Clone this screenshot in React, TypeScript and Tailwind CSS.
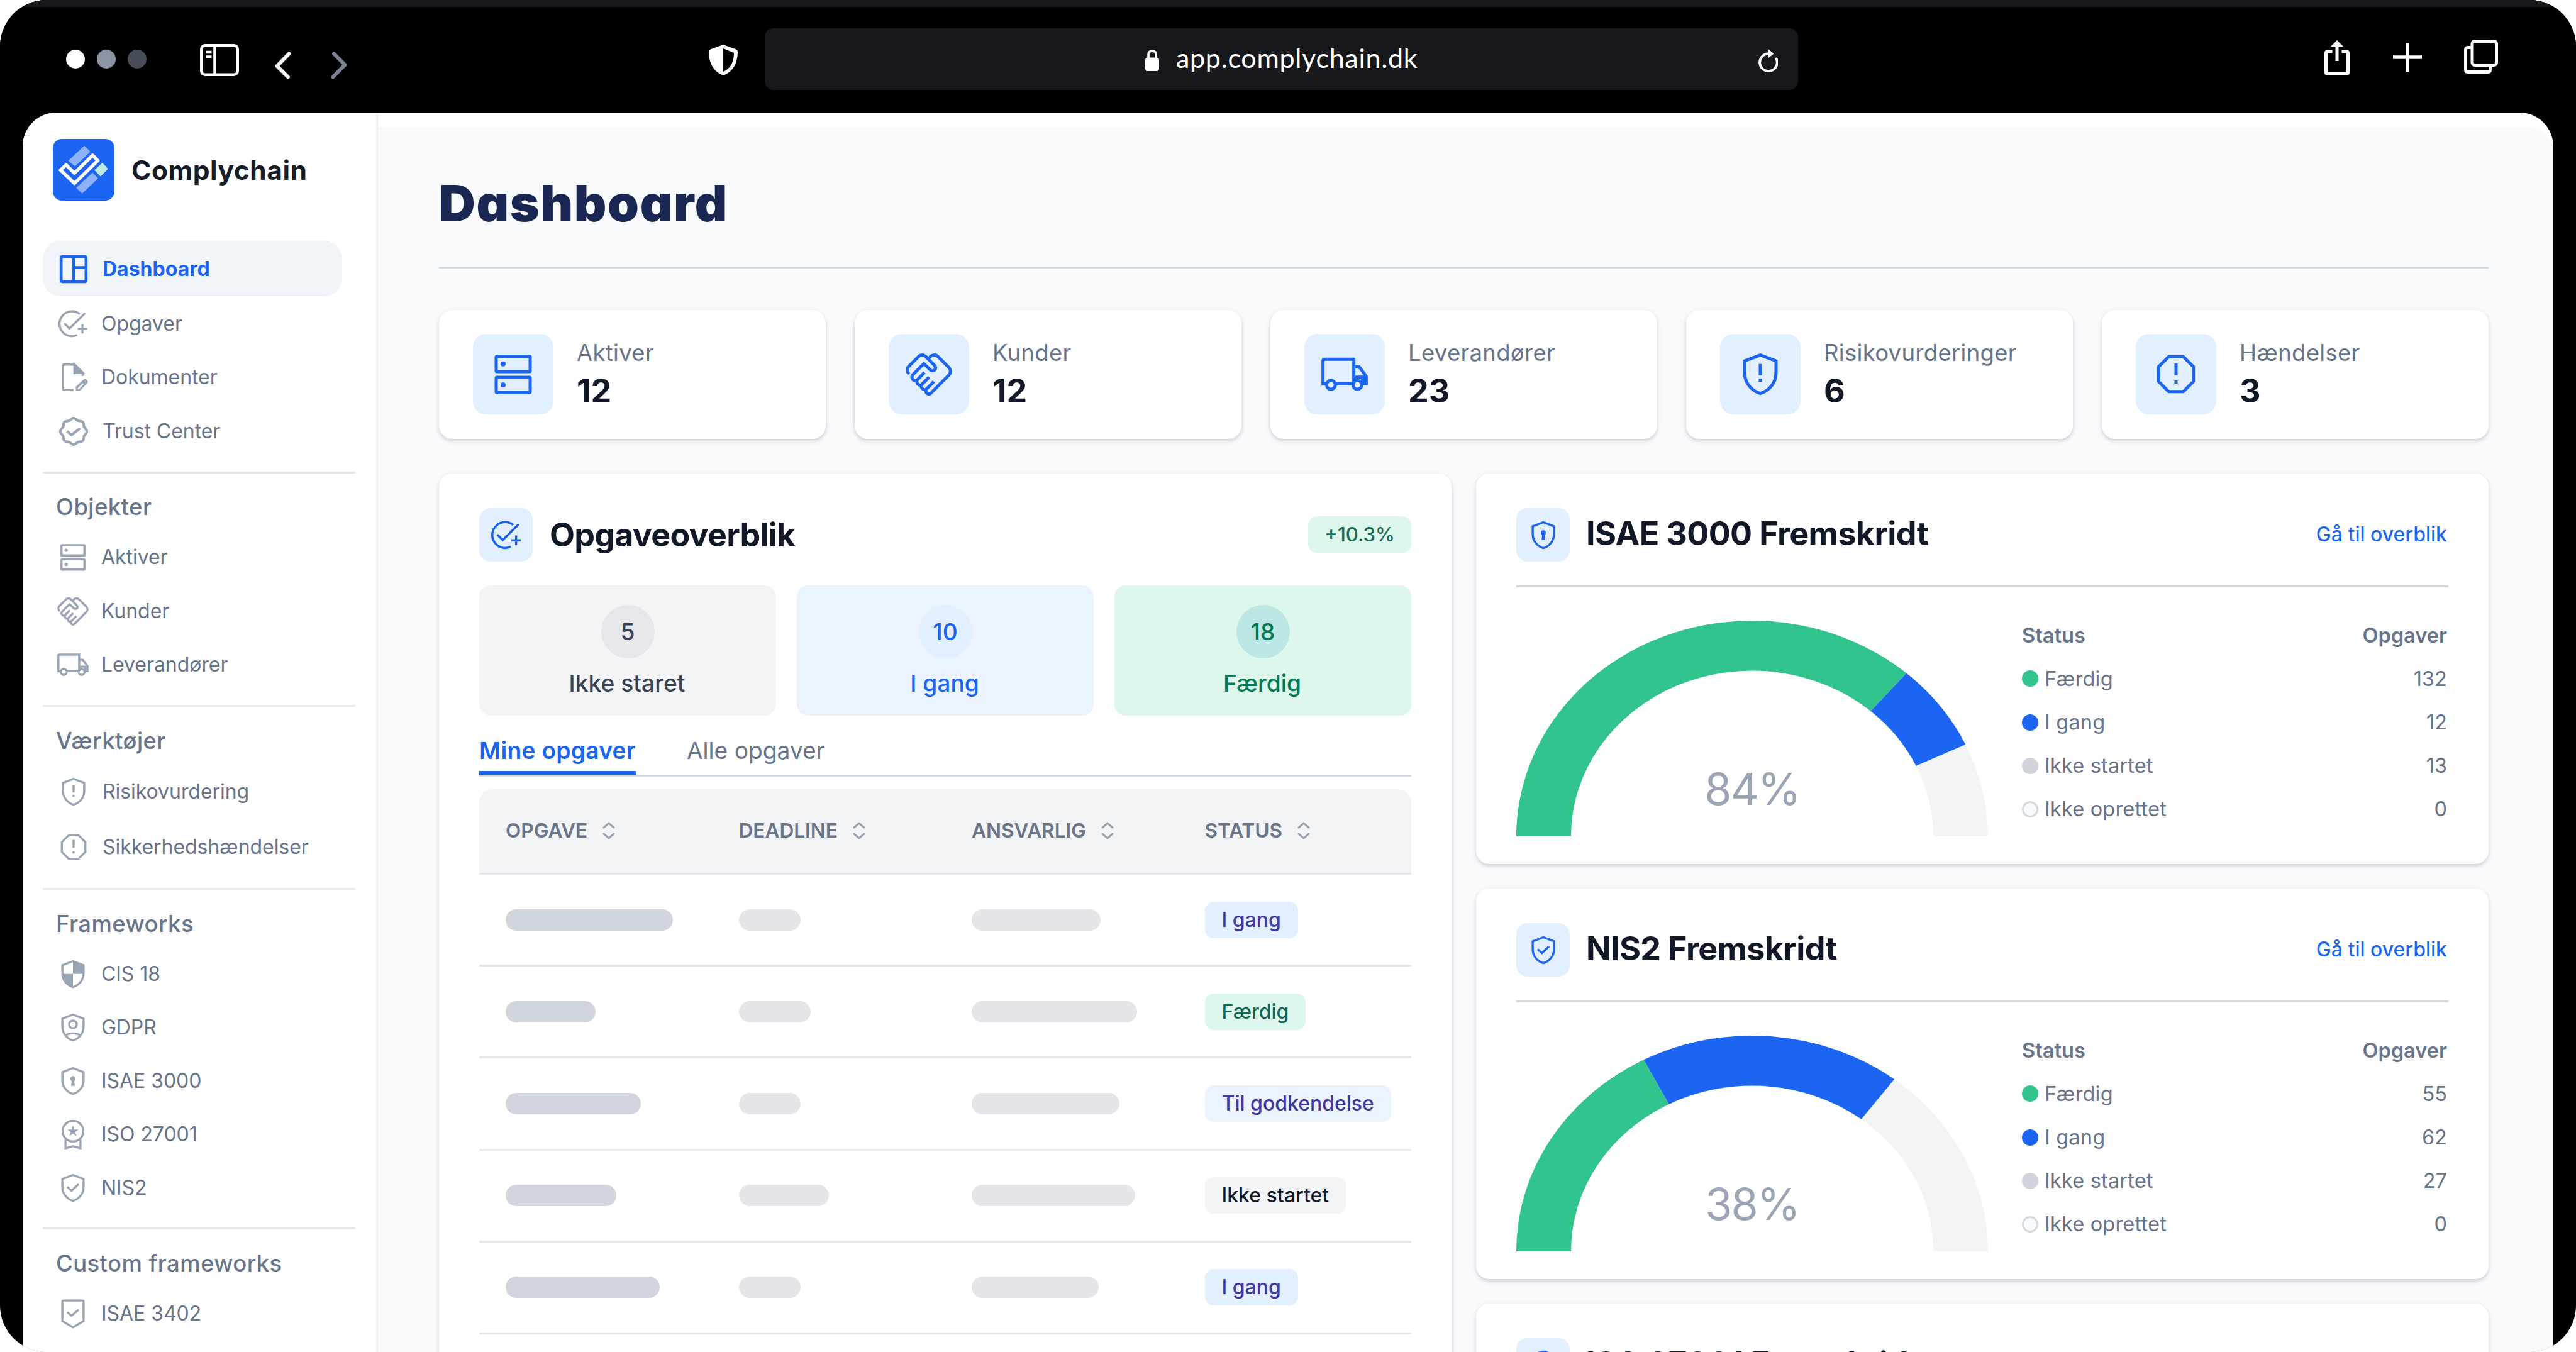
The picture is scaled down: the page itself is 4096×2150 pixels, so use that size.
import type { ReactNode } from 'react';
import clsx from 'clsx';

/* ---------- Icons ---------- */

const SHIELD = 'M12 2.9 19.5 5.7V11.4C19.5 16 16.3 19.9 12 21.2 7.7 19.9 4.5 16 4.5 11.4V5.7Z';

type IconProps = { className?: string; stroke?: number };

function Svg({ className, stroke = 1.5, children }: IconProps & { children: ReactNode }) {
  return (
    <svg
      viewBox="0 0 24 24"
      fill="none"
      stroke="currentColor"
      strokeWidth={stroke}
      className={clsx('shrink-0', className)}
    >
      {children}
    </svg>
  );
}

function GridIcon(props: IconProps) {
  return (
    <Svg {...props} stroke={2}>
      <rect x="3.5" y="3.5" width="17" height="17" rx="0.8" />
      <path d="M12 3.5V20.5M12 11H20.5" />
    </Svg>
  );
}

function TaskIcon(props: IconProps) {
  return (
    <Svg {...props}>
      <path d="M16.8 5.1A8.8 8.8 0 1 0 15 19.9" />
      <path d="M5.9 11.7 9.6 15.3 20.5 4.5M18.7 12.2V18.8M15.4 15.5H22" />
    </Svg>
  );
}

function DocumentIcon(props: IconProps) {
  return (
    <Svg {...props}>
      <path d="M12.4 21H5.6A.6.6 0 0 1 5 20.4V3.6A.6.6 0 0 1 5.6 3H13.2L19 8.8V11" />
      <path d="M13 3V9H19Z" fill="currentColor" />
      <path
        d="M14 21.7V18.7L19.6 13.4Q20.5 12.7 21.4 13.5L22.1 14.2Q23 15.2 22.1 16.1L16.8 21.7ZM15.5 20.3H16.2L19.6 16.9 18.9 16.2 15.5 19.5Z"
        fill="currentColor"
        fillRule="evenodd"
        stroke="none"
      />
    </Svg>
  );
}

function SealIcon(props: IconProps) {
  return (
    <Svg {...props} stroke={1.8}>
      <path
        strokeLinejoin="round"
        d="M21.4 12c0 1.3-1.5 2.3-2 3.2-.4 1 0 2.7-.9 3.5s-2.5.5-3.5.9c-.9.4-1.7 1.8-3 1.8s-2.1-1.4-3-1.8c-1-.4-2.6 0-3.5-.9s-.5-2.5-.9-3.5c-.5-.9-2-1.9-2-3.2s1.5-2.3 2-3.2c.4-1 0-2.7.9-3.5s2.5-.5 3.5-.9c.9-.4 1.7-1.8 3-1.8s2.1 1.4 3 1.8c1 .4 2.6 0 3.5.9s.5 2.5.9 3.5c.5.9 2 1.9 2 3.2Z"
      />
      <path d="M7.4 11.9 10.5 14.5 16.6 9.8" />
    </Svg>
  );
}

function ServerIcon(props: IconProps) {
  return (
    <Svg {...props}>
      <rect x="3.9" y="3.5" width="16.2" height="7.3" rx="0.4" />
      <rect x="3.9" y="13.5" width="16.2" height="7.3" rx="0.4" />
      <circle cx="7.2" cy="7.15" r="1.2" fill="currentColor" stroke="none" />
      <circle cx="7.2" cy="17.15" r="1.2" fill="currentColor" stroke="none" />
    </Svg>
  );
}

function HandshakeIcon(props: IconProps) {
  return (
    <Svg {...props}>
      <path
        strokeLinejoin="round"
        d="M2.5 12C1.5 10.8 1.5 9.2 2.5 8.2L7 3.7C8 2.6 9.5 2.6 10.5 3.6L14.7 7.9C15.3 8.6 15.3 9.4 14.7 10 14.1 10.6 13.2 10.5 12.6 9.9L9.6 7 4.4 12.2C3.7 12.9 3.7 13.9 4.4 14.6 4.9 15.1 5.6 15.3 6.2 15 6.1 16.6 7 17.4 8.4 17.2 8.2 18.7 9.1 19.5 10.5 19.4 10.4 21.3 12 22 13 21L21.6 12.4C22.5 11.4 22.5 9.9 21.6 8.9L16.4 3.7C15.2 2.5 13.4 2.6 12.1 4.2"
      />
      <path d="M6.2 15 9.9 11.2M8.4 17.2 12.1 13.4M10.5 19.4 14.4 15.5" />
    </Svg>
  );
}

function TruckIcon(props: IconProps) {
  return (
    <Svg {...props}>
      <path d="M3.3 16.6H1.7V5.5A.6.6 0 0 1 2.3 4.9H16.4V16.6M7.6 16.6H15.9M16.4 8.5H18.9L22.3 13V16.6H20.3M16.4 13.4H22.3" />
      <path d="M19.5 13.4H22.3V16.6H20.3Z" fill="currentColor" stroke="none" />
      <circle cx="5.5" cy="17.1" r="2.1" />
      <circle cx="18.1" cy="17.1" r="2.1" />
    </Svg>
  );
}

function ShieldAlertIcon(props: IconProps) {
  return (
    <Svg {...props}>
      <path d={SHIELD} />
      <path d="M12 7.1V12.5M12 14.1V15.7" />
    </Svg>
  );
}

function OctagonAlertIcon(props: IconProps) {
  return (
    <Svg {...props}>
      <path d="M8.5 3.7H15.5L20.3 8.5V15.5L15.5 20.3H8.5L3.7 15.5V8.5Z" />
      <path d="M12 6.9V12.6M12 15V16.5" />
    </Svg>
  );
}

function ShieldQuarterIcon(props: IconProps) {
  return (
    <Svg {...props}>
      <path d={SHIELD} />
      <path d="M12 2.9 19.5 5.7V11.9H12ZM12 11.9V21.2C8 19.9 4.9 16.4 4.5 11.9Z" fill="currentColor" stroke="none" />
    </Svg>
  );
}

function ShieldUserIcon(props: IconProps) {
  return (
    <Svg {...props}>
      <path d={SHIELD} />
      <circle cx="12" cy="9.8" r="2.7" />
      <path d="M6.5 17.6C9.5 15.7 14.5 15.7 17.5 17.6" />
    </Svg>
  );
}

function ShieldLockIcon(props: IconProps) {
  return (
    <Svg {...props}>
      <path d={SHIELD} />
      <circle cx="12" cy="10.4" r="1.8" fill="currentColor" stroke="none" />
      <path d="M11.3 11H12.7L13.3 15.3H10.7Z" fill="currentColor" stroke="none" />
    </Svg>
  );
}

function RibbonIcon(props: IconProps) {
  return (
    <Svg {...props}>
      <circle cx="12" cy="9.7" r="7.3" />
      <path d="M6.7 15.5V21.8L12 20.3 17.3 21.8V15.5" />
      <path
        d="M12 5.6 12.95 8.5H16L13.55 10.3 14.5 13.2 12 11.4 9.5 13.2 10.45 10.3 8 8.5H11.05Z"
        fill="currentColor"
        stroke="none"
      />
    </Svg>
  );
}

function ShieldCheckIcon(props: IconProps) {
  return (
    <Svg {...props}>
      <path d={SHIELD} />
      <path d="M8 11.3 11 14 16 9.3" />
    </Svg>
  );
}

function BookmarkCheckIcon(props: IconProps) {
  return (
    <Svg {...props}>
      <path d="M4.5 3.4A.8.8 0 0 1 5.3 2.7H18.7A.8.8 0 0 1 19.5 3.4V17.2L12 21.7 4.5 17.2Z" />
      <path d="M8 11 11 13.5 16 9.2" />
    </Svg>
  );
}

function SortIcon() {
  return (
    <svg viewBox="0 0 20 28" fill="none" stroke="#9ca5b4" strokeWidth="3" strokeLinecap="round" className="h-[28px] w-[20px]">
      <path d="M2 9 10 2 18 9M2 19 10 26 18 19" />
    </svg>
  );
}

function Logo() {
  return (
    <svg viewBox="0 0 100 100" className="size-[98px] shrink-0">
      <rect width="100" height="100" rx="15" fill="#1c64f2" />
      <path d="M51 11 61 20.5 36 44.5 25 35.5ZM64.5 54.5 73.5 64 47.5 88.5 38 79Z" fill="#fff" fillOpacity="0.5" />
      <path d="M80.5 38.5 89.5 48.5 77.5 61 67.5 50.5Z" fill="#bcebe8" />
      <path
        d="M21.5 42 12.5 50.5 35 72 73 35 64.5 26.5 35 55.5Z"
        fill="none"
        stroke="#fff"
        strokeWidth="5.5"
        strokeLinejoin="round"
      />
    </svg>
  );
}

/* ---------- Browser chrome ---------- */

function BrowserBar() {
  return (
    <header className="flex h-[179px] shrink-0 items-center border-t-[11px] border-[#17181c] bg-black pb-[2px] pl-[105px] text-white">
      <div className="flex gap-[19px]">
        <span className="size-[30px] rounded-full bg-white" />
        <span className="size-[30px] rounded-full bg-[#8b95a4]" />
        <span className="size-[30px] rounded-full bg-[#464d59]" />
      </div>

      <svg viewBox="0 0 62 51" fill="none" stroke="currentColor" strokeWidth="4.5" className="mt-[2px] ml-[85px] h-[51px] w-[62px]">
        <rect x="2.25" y="2.25" width="57.5" height="46.5" rx="6" />
        <path d="M23.5 2V49M10 13H18.5M10 20.5H18.5" />
      </svg>
      <svg viewBox="0 0 26 44" fill="none" stroke="currentColor" strokeWidth="6" strokeLinecap="round" strokeLinejoin="round" className="mt-[19px] ml-[57px] h-[44px] w-[26px]">
        <path d="M22.5 3.5 3.5 23 21 40.5" />
      </svg>
      <svg viewBox="0 0 26 44" fill="none" stroke="#788292" strokeWidth="6" strokeLinecap="round" strokeLinejoin="round" className="mt-[19px] ml-[63px] h-[44px] w-[26px]">
        <path d="M5 3.5 22.5 21 3.5 40.5" />
      </svg>

      <svg viewBox="0 0 46 49" className="mt-[2px] ml-[575px] h-[49px] w-[46px]">
        <path d="M23 0 43.5 7.5Q46 8.5 46 11.5C46 30 38 43 23 49 8 43 0 30 0 11.5Q0 8.5 2.5 7.5Z" fill="#fff" />
        <path d="M23 6 40 13C40 29 34 38 23 43Z" fill="#000" />
      </svg>

      <div className="ml-[43px] flex h-[98px] w-[1643px] items-center rounded-[14px] bg-[#17181c] pr-[32px] pl-[605px]">
        <svg viewBox="0 0 22 34" className="mt-[4px] h-[34px] w-[22px]">
          <path d="M5 14V8Q5 2 11 2T17 8V14" fill="none" stroke="#fff" strokeWidth="3.5" />
          <rect y="12.5" width="22" height="21.5" rx="4" fill="#fff" />
        </svg>
        <span className="mb-[5px] ml-[27px] font-['Lato','Open_Sans',sans-serif] text-[43px] leading-none tracking-[0.7px]">
          app.complychain.dk
        </span>
        <svg viewBox="0 0 32 37" fill="none" stroke="currentColor" strokeWidth="4" className="mt-[5px] ml-auto h-[37px] w-[32px]">
          <path d="M17 7.5A13.8 13.8 0 1 0 29.5 15.5" strokeLinecap="round" />
          <path d="M16.5 0 25.5 7.5 16.5 14.5Z" fill="currentColor" stroke="none" />
        </svg>
      </div>

      <svg viewBox="0 0 40 56" fill="none" stroke="currentColor" strokeWidth="5" className="mb-[5px] ml-[837px] h-[56px] w-[40px]">
        <path d="M12.5 18H5Q2.5 18 2.5 20.5V51Q2.5 53.5 5 53.5H35Q37.5 53.5 37.5 51V20.5Q37.5 18 35 18H27.5M20 8V33" />
        <path d="M20 0 30 10H10Z" fill="currentColor" stroke="none" />
      </svg>
      <svg viewBox="0 0 46 46" stroke="currentColor" strokeWidth="5.5" className="mb-[7px] ml-[69px] size-[46px]">
        <path d="M23 0V46M0 23H46" />
      </svg>
      <svg viewBox="0 0 54 54" fill="none" stroke="currentColor" strokeWidth="5" className="mb-[8px] ml-[67px] size-[54px]">
        <rect x="13" y="2.5" width="38.5" height="38" rx="4" />
        <path d="M13 12.5H6Q2.5 12.5 2.5 16V48Q2.5 51.5 6 51.5H38Q41.5 51.5 41.5 48V41" />
      </svg>
    </header>
  );
}

/* ---------- Sidebar ---------- */

type NavItem = { label: string; icon: (props: IconProps) => ReactNode; shift?: boolean };

const mainNav: NavItem[] = [
  { label: 'Opgaver', icon: TaskIcon },
  { label: 'Dokumenter', icon: DocumentIcon },
  { label: 'Trust Center', icon: SealIcon, shift: true },
];

const navSections: { title: string; row: string; items: NavItem[] }[] = [
  {
    title: 'Objekter',
    row: 'h-[85.5px]',
    items: [
      { label: 'Aktiver', icon: ServerIcon },
      { label: 'Kunder', icon: HandshakeIcon },
      { label: 'Leverandører', icon: TruckIcon },
    ],
  },
  {
    title: 'Værktøjer',
    row: 'h-[88px]',
    items: [
      { label: 'Risikovurdering', icon: ShieldAlertIcon, shift: true },
      { label: 'Sikkerhedshændelser', icon: OctagonAlertIcon, shift: true },
    ],
  },
  {
    title: 'Frameworks',
    row: 'h-[85px]',
    items: [
      { label: 'CIS 18', icon: ShieldQuarterIcon },
      { label: 'GDPR', icon: ShieldUserIcon },
      { label: 'ISAE 3000', icon: ShieldLockIcon },
      { label: 'ISO 27001', icon: RibbonIcon },
      { label: 'NIS2', icon: ShieldCheckIcon },
    ],
  },
  {
    title: 'Custom frameworks',
    row: 'h-[85px]',
    items: [{ label: 'ISAE 3402', icon: BookmarkCheckIcon }],
  },
];

function NavLink({ label, icon: Icon, shift, row }: NavItem & { row: string }) {
  return (
    <li className={clsx('flex items-center', row, shift ? 'pl-[22px]' : 'pl-[21px]')}>
      <Icon className="size-[54px] text-[#99a4b4]" />
      <span className={clsx('text-[32px] tracking-[-0.05px]', shift ? 'ml-[19px]' : 'ml-[18px]')}>{label}</span>
    </li>
  );
}

function Sidebar() {
  return (
    <aside className="w-[565px] shrink-0 border-r-[3px] border-[#f0f1f3] bg-white pt-[42px] pl-[32px] text-[#69758a]">
      <div className="flex items-center pl-[16px]">
        <Logo />
        <span className="mt-[2px] ml-[27px] text-[42.5px] font-bold tracking-[0.5px] text-[#161c28]">Complychain</span>
      </div>

      <nav className="mt-[64px] w-[497px]">
        <div className="flex h-[88px] w-[476px] items-center rounded-[28px] bg-[#f1f5f9] pt-[1px] pl-[21px] text-[#1c64f2]">
          <GridIcon className="size-[56px]" />
          <span className="ml-[18px] text-[32px] font-bold">Dashboard</span>
        </div>
        <ul className="mt-[1px]">
          {mainNav.map((item) => (
            <NavLink key={item.label} row="h-[85.5px]" {...item} />
          ))}
        </ul>
        {navSections.map((section) => (
          <section key={section.title} className="mt-[21px] border-t-[3px] border-[#e6e7eb] pt-[17px]">
            <h2 className="flex h-[74px] items-center pl-[21px] text-[36.5px] font-medium tracking-[0.4px]">{section.title}</h2>
            <ul>
              {section.items.map((item) => (
                <NavLink key={item.label} row={section.row} {...item} />
              ))}
            </ul>
          </section>
        ))}
      </nav>
    </aside>
  );
}

/* ---------- Dashboard ---------- */

const CARD = 'rounded-[21px] bg-white shadow-[0_3px_8px_rgba(20,25,60,0.12),0_3px_4px_rgba(20,25,60,0.08)]';

const stats = [
  { label: 'Aktiver', value: 12, icon: ServerIcon },
  { label: 'Kunder', value: 12, icon: HandshakeIcon },
  { label: 'Leverandører', value: 23, icon: TruckIcon },
  { label: 'Risikovurderinger', value: 6, icon: ShieldAlertIcon },
  { label: 'Hændelser', value: 3, icon: OctagonAlertIcon },
];

function StatCards() {
  return (
    <div className="mt-[66px] grid grid-cols-5 gap-[46px]">
      {stats.map(({ label, value, icon: Icon }) => (
        <div key={label} className={clsx(CARD, 'flex h-[205px] items-center pb-[2px] pl-[54px]')}>
          <div className="flex size-[128px] items-center justify-center rounded-[21px] bg-[#e1effe] text-[#1c64f2]">
            <Icon className="size-[80px]" />
          </div>
          <div className="-mt-[1px] ml-[37px]">
            <p className="text-[36.5px] leading-[55px] tracking-[0.3px] text-[#69758a]">{label}</p>
            <p className="text-[52px] leading-[65px] font-bold text-[#111928]">{value}</p>
          </div>
        </div>
      ))}
    </div>
  );
}

const taskCounts = [
  { label: 'Ikke staret', value: 5, box: 'bg-[#f3f4f6] text-[#374151]', circle: 'bg-[#e5e7eb]' },
  { label: 'I gang', value: 10, box: 'bg-[#ebf3ff] text-[#1c64f2]', circle: 'bg-[#e1effe]' },
  { label: 'Færdig', value: 18, box: 'bg-[#def7ec] text-[#057a55]', circle: 'bg-[#bce7e4]' },
];

const badgeStyles: Record<string, string> = {
  'I gang': 'bg-[#e1effe] text-[#42389d]',
  'Færdig': 'bg-[#def7ec] text-[#0f6650]',
  'Til godkendelse': 'bg-[#ebf3fe] text-[#42389d]',
  'Ikke startet': 'bg-[#f3f4f6] text-[#111928]',
};

// Placeholder bar widths for the first three columns
const tasks = [
  { bars: [266, 98, 205], status: 'I gang' },
  { bars: [143, 114, 263], status: 'Færdig' },
  { bars: [215, 98, 235], status: 'Til godkendelse' },
  { bars: [176, 143, 260], status: 'Ikke startet' },
  { bars: [245, 98, 202], status: 'I gang' },
];

function TaskOverview() {
  return (
    <section className={clsx(CARD, 'h-[1500px] px-[64px] pt-[55px]')}>
      <div className="flex h-[85px] items-center">
        <div className="flex size-[85px] items-center justify-center rounded-[18px] bg-[#e1effe] text-[#1c64f2]">
          <TaskIcon className="size-[56px]" />
        </div>
        <h2 className="ml-[27px] text-[52px] leading-[83px] font-bold tracking-[-0.8px] text-[#111928]">Opgaveoverblik</h2>
        <span className="ml-auto flex h-[59px] w-[164px] items-center justify-center rounded-[15px] bg-[#def7ec] pb-[1px] text-[31px] font-medium text-[#1b6a56]">
          +10.3%
        </span>
      </div>

      <div className="mt-[38px] grid grid-cols-3 gap-[33px]">
        {taskCounts.map(({ label, value, box, circle }) => (
          <div key={label} className={clsx('flex h-[207px] flex-col items-center rounded-[18px] pt-[31px] text-[37.2px] font-medium', box)}>
            <span className={clsx('flex size-[85px] items-center justify-center rounded-full', circle)}>{value}</span>
            <span className="mt-[13px] mr-[2px] leading-[54px]">{label}</span>
          </div>
        ))}
      </div>

      <div className="flex h-[97px] border-b-[3px] border-[#d1d7df] text-[37.2px]">
        <span className="flex items-center border-b-[6px] border-[#1c64f2] pt-[24px] font-semibold tracking-[0.25px] text-[#1c64f2]">Mine opgaver</span>
        <span className="ml-[81px] flex items-center pt-[18px] text-[#69758a]">Alle opgaver</span>
      </div>

      <div className="mt-[20px]">
        <div className="grid h-[136px] grid-cols-4 rounded-t-[21px] border-b-[3px] border-[#e5e7eb] bg-[#f3f4f6] text-[31.6px] font-semibold text-[#69758a]">
          {['Opgave', 'Deadline', 'Ansvarlig', 'Status'].map((title) => (
            <div key={title} className="flex items-center gap-[24px] pb-[1px] pl-[42px] uppercase">
              {title}
              <SortIcon />
            </div>
          ))}
        </div>
        {tasks.map(({ bars, status }, row) => (
          <div key={row} className="grid h-[146.2px] grid-cols-4 items-center border-b-[3px] border-[#e5e7eb]">
            {bars.map((width, col) => (
              <div key={col} className="pl-[42px]">
                <div className={clsx('h-[34px] rounded-full', col === 0 ? 'bg-[#d1d5dd]' : 'bg-[#e5e6ea]')} style={{ width }} />
              </div>
            ))}
            <div className="flex pl-[42px]">
              <span className={clsx('flex h-[58px] items-center rounded-[14px] px-[27px] text-[32px] font-medium whitespace-nowrap', badgeStyles[status])}>
                {status}
              </span>
            </div>
          </div>
        ))}
      </div>
    </section>
  );
}

type GaugeProps = { done: number; active: number; label: string };

// The gauge is slightly squashed: 750 wide, 343 tall
function Gauge({ done, active, label }: GaugeProps) {
  const point = (t: number, rx: number, ry: number) => {
    const a = Math.PI * (1 - t);
    return `${375 + rx * Math.cos(a)} ${343 - ry * Math.sin(a)}`;
  };
  const arc = (from: number, to: number) =>
    `M${point(from, 375, 343)}A375 343 0 0 1 ${point(to, 375, 343)}L${point(to, 288, 263.5)}A288 263.5 0 0 0 ${point(from, 288, 263.5)}Z`;

  return (
    <div className="grid w-[750px] shrink-0">
      <svg viewBox="0 0 750 343" className="col-start-1 row-start-1 h-[343px] w-[750px]">
        <path d={arc(0, 1)} fill="#f3f4f6" />
        <path d={arc(done, active)} fill="#1c64f2" />
        <path d={arc(0, done)} fill="#31c48d" />
      </svg>
      <span className="col-start-1 row-start-1 self-end pb-[31px] text-center text-[70px] leading-[89px] tracking-[-2px] text-[#9ca5b5]">{label}</span>
    </div>
  );
}

type ProgressProps = {
  title: string;
  icon: (props: IconProps) => ReactNode;
  gauge?: GaugeProps;
  counts?: number[];
};

const legend = [
  { label: 'Færdig', dot: 'bg-[#31c48d]' },
  { label: 'I gang', dot: 'bg-[#1c64f2]' },
  { label: 'Ikke startet', dot: 'bg-[#d1d5db]' },
  { label: 'Ikke oprettet', dot: 'border-[3px] border-[#d5d9e0] bg-[#f9fafb]' },
];

function ProgressCard({ title, icon: Icon, gauge, counts }: ProgressProps) {
  return (
    <section className={clsx(CARD, 'h-[621px] shrink-0 px-[64px] pt-[55px]')}>
      <div className="flex h-[126px] items-start border-b-[3px] border-[#d1d5dd]">
        <div className="flex size-[85px] items-center justify-center rounded-[18px] bg-[#e1effe] text-[#1c64f2]">
          <Icon className="size-[54px]" />
        </div>
        <h2 className="ml-[26px] text-[52px] leading-[82px] font-bold tracking-[-0.65px] text-[#111928]">{title}</h2>
        {gauge && <a className="mr-[2px] ml-auto text-[32px] leading-[83px] font-medium text-[#1c64f2]">Gå til overblik</a>}
      </div>

      {gauge && counts && (
        <div className="mt-[53px] flex">
          <Gauge {...gauge} />
          <div className="-mt-[11.5px] mr-[2px] ml-[54px] flex-1 text-[32.6px] leading-[69.2px] text-[#69758a]">
            <div className="flex justify-between font-semibold">
              <span>Status</span>
              <span>Opgaver</span>
            </div>
            {legend.map(({ label, dot }, i) => (
              <div key={label} className="flex items-center">
                <span className={clsx('mr-[10px] size-[26px] rounded-full', dot)} />
                <span className="tracking-[0.15px]">{label}</span>
                <span className="ml-auto">{counts[i]}</span>
              </div>
            ))}
          </div>
        </div>
      )}
    </section>
  );
}

const progress: ProgressProps[] = [
  {
    title: 'ISAE 3000 Fremskridt',
    icon: ShieldLockIcon,
    gauge: { done: 0.727, active: 0.86, label: '84%' },
    counts: [132, 12, 13, 0],
  },
  {
    title: 'NIS2 Fremskridt',
    icon: ShieldCheckIcon,
    gauge: { done: 0.348, active: 0.706, label: '38%' },
    counts: [55, 62, 27, 0],
  },
  {
    title: 'ISO 27001 Fremskridt',
    icon: RibbonIcon,
  },
];

export default function App() {
  return (
    <div className="h-[2150px] w-[4096px] overflow-hidden bg-white font-['Inter','Liberation_Sans',sans-serif]">
      <div className="flex h-full flex-col overflow-hidden rounded-[74px] bg-black">
        <BrowserBar />
        <div className="mx-[36px] flex min-h-0 flex-1 overflow-hidden rounded-t-[54px] bg-white">
          <Sidebar />
          <main className="mt-[23px] min-w-0 flex-1 overflow-hidden rounded-tr-[40px] bg-[#f9fafc] pr-[103px] pl-[97px]">
            <div className="flex h-[225px] items-center border-b-[3px] border-[#cddce2] pt-[20px]">
              <h1 className="text-[80px] font-black tracking-[1.6px] text-[#1a2752] [font-feature-settings:'cv11']">Dashboard</h1>
            </div>
            <StatCards />
            <div className="mt-[55px] grid grid-cols-2 gap-[39px]">
              <TaskOverview />
              <div className="flex flex-col gap-[39px]">
                {progress.map((card) => (
                  <ProgressCard key={card.title} {...card} />
                ))}
              </div>
            </div>
          </main>
        </div>
      </div>
    </div>
  );
}
